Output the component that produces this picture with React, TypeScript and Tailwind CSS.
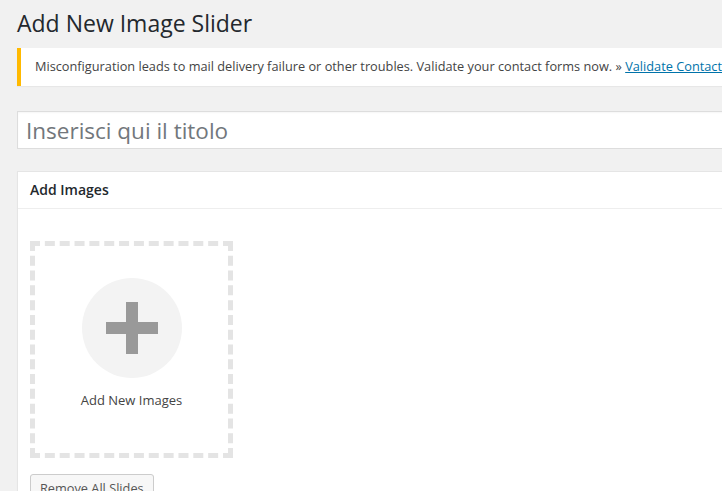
export default function App() {
  return (
    <div
      className="w-[722px] h-[491px] overflow-hidden bg-[#f1f1f1] text-[13px] text-[#444]"
      style={{ fontFamily: '"Open Sans", "Liberation Sans", sans-serif' }}
    >
      <div className="w-[900px] pl-[17px]">
        <h1 className="pt-[9px] pb-[4px] text-[23px] leading-[29.9px] font-normal text-[#23282d]">
          Add New Image Slider
        </h1>

        <div className="mt-[5px] bg-white border-l-4 border-[#ffb900] shadow-[0_1px_1px_rgba(0,0,0,0.04)] px-[12px] py-[1px]">
          <p className="my-[6.5px] p-[2px] text-[12.75px] leading-[19.5px] whitespace-nowrap">
            Misconfiguration leads to mail delivery failure or other troubles. Validate your contact forms now. »{' '}
            <a href="#" className="text-[#0073aa] underline">
              Validate Contact Forms
            </a>
          </p>
        </div>

        <div className="mt-[25px]">
          <input
            type="text"
            placeholder="Inserisci qui il titolo"
            className="w-full h-[38px] bg-white border border-[#ddd] px-[8px] text-[22.5px] text-[#32373c] placeholder:text-[#72777c] outline-none shadow-[inset_0_1px_2px_rgba(0,0,0,0.04)]"
          />
        </div>

        <div className="mt-[22px] bg-white border border-[#e5e5e5] shadow-[0_1px_1px_rgba(0,0,0,0.04)]">
          <h2 className="px-[12px] py-[8px] text-[14px] leading-[19.6px] font-semibold text-[#23282d] border-b border-[#eee]">
            Add Images
          </h2>
          <div className="px-[12px] pt-[32px] pb-[12px]">
            <div className="w-[203px] h-[217px] border-[5px] border-dashed border-[#e4e4e4] flex flex-col items-center pt-[32px] cursor-pointer">
              <div className="w-[100px] h-[100px] rounded-full bg-[#f3f3f3] flex items-center justify-center">
                <svg width="52" height="52" viewBox="0 0 52 52">
                  <rect x="0" y="20" width="52" height="12" fill="#999" />
                  <rect x="20" y="0" width="12" height="52" fill="#999" />
                </svg>
              </div>
              <div className="mt-[13px] text-[13px] leading-[19.5px] text-[#444]">Add New Images</div>
            </div>
            <div className="mt-[16px]">
              <button className="h-[28px] px-[9px] pb-[1px] leading-[26px] text-[12.75px] text-[#555] bg-[#f7f7f7] border border-[#ccc] rounded-[3px] shadow-[0_1px_0_#ccc]">
                Remove All Slides
              </button>
            </div>
          </div>
        </div>
      </div>
    </div>
  );
}
